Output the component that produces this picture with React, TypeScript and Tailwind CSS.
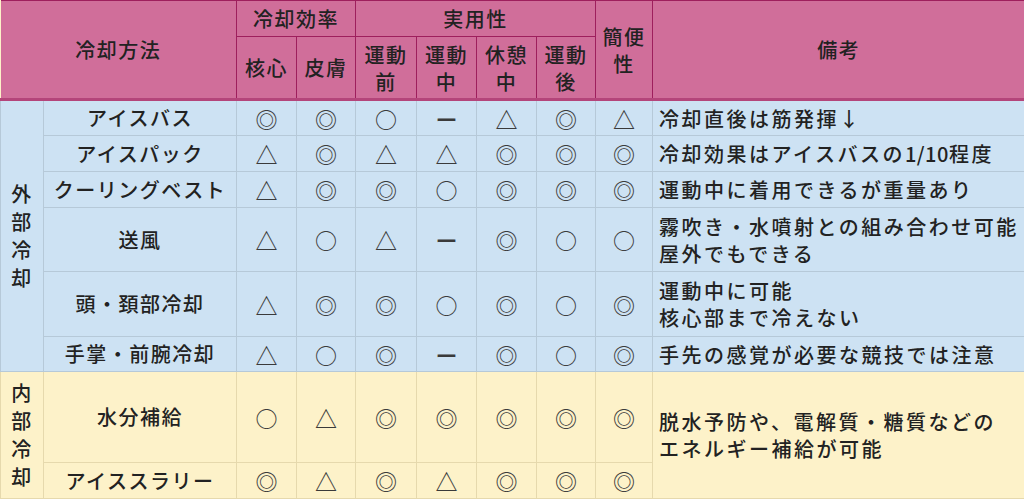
import React from "react";

type Row = {
  name: string;
  marks: string[];
  note?: React.ReactNode[];
  noteSpan?: number;
  h: string;
};

const outerRows: Row[] = [
  { name: "アイスバス", marks: ["◎", "◎", "○", "ー", "△", "◎", "△"], note: ["冷却直後は筋発揮↓"], h: "h-[36px]" },
  {
    name: "アイスパック",
    marks: ["△", "◎", "△", "△", "◎", "◎", "◎"],
    note: [
      <>
        冷却効果はアイスバスの<span className="tracking-[0.5px]">1/10</span>程度
      </>,
    ],
    h: "h-[36px]",
  },
  { name: "クーリングベスト", marks: ["△", "◎", "◎", "○", "◎", "◎", "◎"], note: ["運動中に着用できるが重量あり"], h: "h-[36px]" },
  { name: "送風", marks: ["△", "○", "△", "ー", "◎", "○", "○"], note: ["霧吹き・水噴射との組み合わせ可能", "屋外でもできる"], h: "h-[64px]" },
  { name: "頭・頚部冷却", marks: ["△", "◎", "◎", "○", "◎", "○", "◎"], note: ["運動中に可能", "核心部まで冷えない"], h: "h-[65px]" },
  { name: "手掌・前腕冷却", marks: ["△", "○", "◎", "ー", "◎", "○", "◎"], note: ["手先の感覚が必要な競技では注意"], h: "h-[35px]" },
];

const innerRows: Row[] = [
  { name: "水分補給", marks: ["○", "△", "◎", "◎", "◎", "◎", "◎"], note: ["脱水予防や、電解質・糖質などの", "エネルギー補給が可能"], noteSpan: 2, h: "h-[91px]" },
  { name: "アイススラリー", marks: ["◎", "△", "◎", "△", "◎", "◎", "◎"], h: "h-[36px]" },
];

const head = "border-[1.5px] border-[#9e1f5d] bg-[#d06e9a] text-center align-middle font-medium";

function Body({ rows, label, tone }: { rows: Row[]; label: string; tone: "blue" | "yellow" }) {
  const cell =
    tone === "blue"
      ? "border border-[#b6c9d8] bg-[#cde2f3]"
      : "border border-[#e6d9ad] bg-[#fdf2c9]";
  return (
    <>
      {rows.map((r, i) => (
        <tr key={r.name} className={r.h}>
          {i === 0 && (
            <td rowSpan={rows.length} className={`${cell} p-0 text-center align-middle leading-[28px]`}>
              {label.split("").map((c, k) => (
                <div key={k}>{c}</div>
              ))}
            </td>
          )}
          <td className={`${cell} p-0 text-center align-middle`}>{r.name}</td>
          {r.marks.map((m, j) => (
            <td key={j} className={`${cell} p-0 text-center align-middle text-[22px] tracking-normal text-[#3a3a3a]`}>
              {m}
            </td>
          ))}
          {r.note && (
            <td
              rowSpan={r.noteSpan ?? 1}
              className={`${cell} px-[6px] py-0 text-left align-middle leading-[27px] tracking-[2.5px]`}
            >
              {r.note.map((n, k) => (
                <div key={k} className="whitespace-nowrap">
                  {n}
                </div>
              ))}
            </td>
          )}
        </tr>
      ))}
    </>
  );
}

export default function App() {
  return (
    <div
      className="h-[499px] w-[1024px] overflow-hidden bg-[#fdf2c9] text-[20px] font-medium tracking-[1.5px] text-[#222222]"
      style={{ fontFamily: '"Noto Sans CJK JP", "Noto Sans", sans-serif' }}
    >
      <table className="w-[1024px] table-fixed border-collapse">
        <colgroup>
          <col className="w-[43px]" />
          <col className="w-[193px]" />
          <col className="w-[60px]" />
          <col className="w-[59px]" />
          <col className="w-[61px]" />
          <col className="w-[60px]" />
          <col className="w-[60px]" />
          <col className="w-[59px]" />
          <col className="w-[57px]" />
          <col className="w-[372px]" />
        </colgroup>
        <thead className="leading-[27px]">
          <tr className="h-[36px]">
            <th colSpan={2} rowSpan={2} className={`${head} border-l-0 border-b-[3px] border-b-[#b4457a]`}>
              冷却方法
            </th>
            <th colSpan={2} className={head}>
              冷却効率
            </th>
            <th colSpan={4} className={head}>
              実用性
            </th>
            <th rowSpan={2} className={`${head} border-b-[3px] border-b-[#b4457a]`}>
              簡便
              <br />性
            </th>
            <th rowSpan={2} className={`${head} border-r-0 border-b-[3px] border-b-[#b4457a]`}>
              備考
            </th>
          </tr>
          <tr className="h-[63px]">
            {["核心", "皮膚"].map((t) => (
              <th key={t} className={`${head} border-b-[3px] border-b-[#b4457a]`}>
                {t}
              </th>
            ))}
            {[
              ["運動", "前"],
              ["運動", "中"],
              ["休憩", "中"],
              ["運動", "後"],
            ].map(([a, b]) => (
              <th key={a + b} className={`${head} border-b-[3px] border-b-[#b4457a]`}>
                {a}
                <br />
                {b}
              </th>
            ))}
          </tr>
        </thead>
        <tbody>
          <Body rows={outerRows} label="外部冷却" tone="blue" />
          <Body rows={innerRows} label="内部冷却" tone="yellow" />
        </tbody>
      </table>
    </div>
  );
}
